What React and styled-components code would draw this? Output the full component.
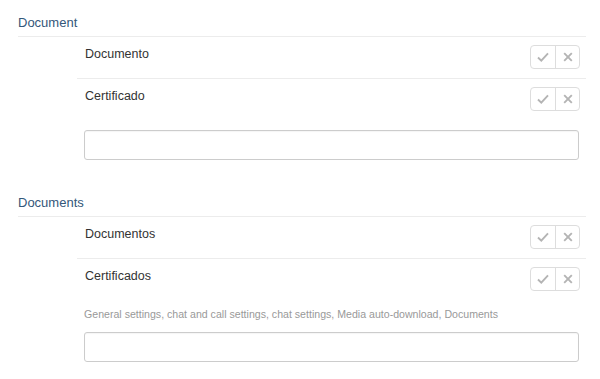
import React from "react"
import styled, { createGlobalStyle } from "styled-components"

const GlobalStyle = createGlobalStyle`
  body {
    margin: 0;
    background: #fff;
    font-family: "Liberation Sans", Arial, sans-serif;
  }
`

const Page = styled.div`
  padding: 0 14px 0 18px;
`

const Section = styled.section`
  & + & {
    margin-top: 20px;
  }
`

const SectionTitle = styled.div`
  font-size: 13px;
  line-height: 20px;
  color: #34577a;
  padding: 13px 0 3px;
  border-bottom: 1px solid #ececec;
`

const Body = styled.div`
  margin-left: 59px;
`

const Row = styled.div`
  display: flex;
  align-items: flex-start;
  justify-content: space-between;
  padding: 8px 6px 9px 8px;
  border-bottom: ${p => (p.last ? "none" : "1px solid #ececec")};
`

const Label = styled.span`
  font-size: 12.5px;
  line-height: 19px;
  color: #333;
`

const BtnGroup = styled.div`
  display: flex;
  border: 1px solid #ddd;
  border-radius: 4px;
  height: 22px;
`

const IconBtn = styled.button`
  width: 24px;
  padding: 0;
  margin: 0;
  border: none;
  background: transparent;
  display: flex;
  align-items: center;
  justify-content: center;
  & + & {
    border-left: 1px solid #ddd;
  }
`

const Field = styled.div`
  padding: 0 7px 0 7px;
`

const Hint = styled.div`
  font-size: 10.6px;
  line-height: 16px;
  color: #999;
  margin-top: 6px;
`

const TextInput = styled.input`
  display: block;
  box-sizing: border-box;
  width: 100%;
  height: 30px;
  margin-top: 10px;
  border: 1px solid #ccc;
  border-radius: 3px;
  box-shadow: inset 0 1px 1px rgba(0, 0, 0, 0.04);
  outline: none;
`

const Check = () => (
  <svg width="12" height="10" viewBox="0 0 12 10">
    <path d="M1 5.5 L4.3 8.6 L11 1.4" fill="none" stroke="#b4b4b4" strokeWidth="1.9" />
  </svg>
)

const Cross = () => (
  <svg width="10" height="10" viewBox="0 0 10 10">
    <path d="M1.2 1.2 L8.8 8.8 M8.8 1.2 L1.2 8.8" fill="none" stroke="#b4b4b4" strokeWidth="1.9" />
  </svg>
)

const Actions = () => (
  <BtnGroup>
    <IconBtn>
      <Check />
    </IconBtn>
    <IconBtn>
      <Cross />
    </IconBtn>
  </BtnGroup>
)

const sections = [
  { title: "Document", items: ["Documento", "Certificado"] },
  {
    title: "Documents",
    items: ["Documentos", "Certificados"],
    hint: "General settings, chat and call settings, chat settings, Media auto-download, Documents",
  },
]

export default function App() {
  return (
    <Page>
      <GlobalStyle />
      {sections.map(s => (
        <Section key={s.title}>
          <SectionTitle>{s.title}</SectionTitle>
          <Body>
            {s.items.map((item, i) => (
              <Row key={item} last={i === s.items.length - 1}>
                <Label>{item}</Label>
                <Actions />
              </Row>
            ))}
            <Field>
              {s.hint && <Hint>{s.hint}</Hint>}
              <TextInput type="text" />
            </Field>
          </Body>
        </Section>
      ))}
    </Page>
  )
}
